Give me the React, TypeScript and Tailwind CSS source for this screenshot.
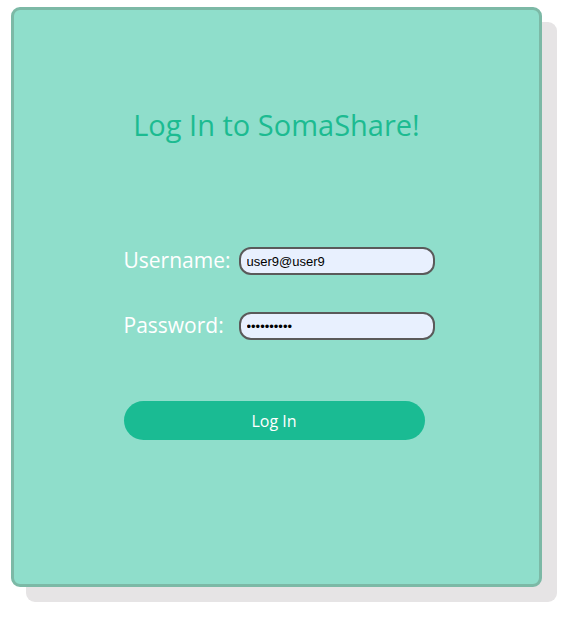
import React from "react";

export default function App() {
  return (
    <div className="w-[582px] h-[617px] bg-white pt-[7px] pl-[11px]" style={{ fontFamily: '"Open Sans", "Noto Sans", sans-serif' }}>
      <div className="w-[531px] h-[580px] rounded-[9px] border-[3px] border-[#7cb9a6] bg-[#8fdecb] shadow-[15px_15px_0_#e6e4e5] flex flex-col items-center">
        <h1 className="mt-[95px] text-[29px] leading-[40px] text-[#1cbb91]">Log In to SomaShare!</h1>
        <div className="mt-[102px] w-[312px] ml-[6px] flex flex-col">
          <div className="flex items-center h-[28px]">
            <label className="text-[21px] text-white w-[115px]">Username:</label>
            <input
              readOnly
              value="user9@user9"
              className="w-[196px] h-[28px] rounded-[12px] border-2 border-[#5a5a5a] bg-[#e8f0fe] px-[6px] text-[13px] text-black outline-none"
              style={{ fontFamily: '"Liberation Sans", Arial, sans-serif' }}
            />
          </div>
          <div className="flex items-center h-[28px] mt-[37px]">
            <label className="text-[21px] text-white w-[115px]">Password:</label>
            <input
              readOnly
              type="password"
              value="abcdefghij"
              className="w-[196px] h-[28px] rounded-[12px] border-2 border-[#5a5a5a] bg-[#e8f0fe] px-[6px] text-[13px] text-black outline-none"
              style={{ fontFamily: '"Liberation Sans", Arial, sans-serif' }}
            />
          </div>
          <button className="mt-[61px] w-[301px] h-[39px] rounded-full bg-[#1abb93] text-white text-[16px]">Log In</button>
        </div>
      </div>
    </div>
  );
}
